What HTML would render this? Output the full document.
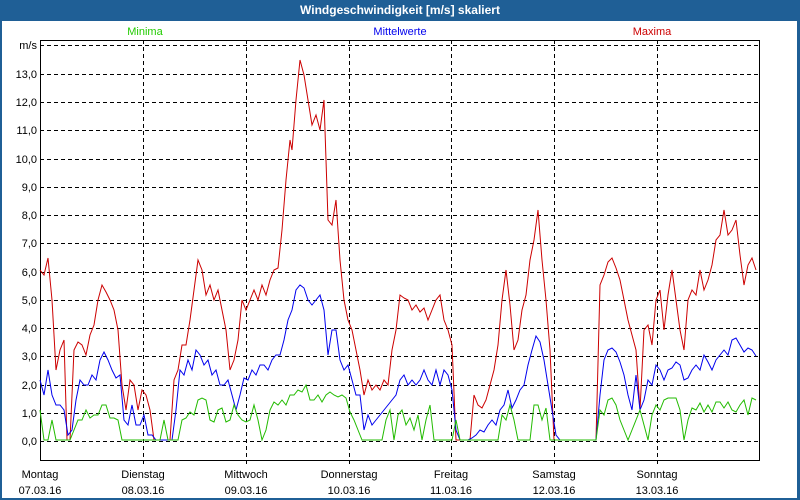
<!DOCTYPE html>
<html><head><style>
body{margin:0;width:800px;height:500px;overflow:hidden;background:#1f5f96;font-family:"Liberation Sans",sans-serif;}
#t{position:absolute;left:0;top:0;width:800px;height:20px;color:#fff;font-weight:bold;font-size:12px;text-align:center;line-height:20px;}
#b{position:absolute;left:2px;top:21px;width:795px;height:477px;background:#fff;}
svg{position:absolute;left:0;top:0}
text{font-family:"Liberation Sans",sans-serif;font-size:11px}
</style></head><body>
<div id="t">Windgeschwindigkeit [m/s] skaliert</div>
<div id="b"></div>
<svg width="800" height="500">
<g stroke="#000" stroke-dasharray="4,3" stroke-width="1">
<line x1="40" x2="760" y1="45.5" y2="45.5"/>
<line x1="40" x2="760" y1="74.5" y2="74.5"/><line x1="40" x2="760" y1="102.5" y2="102.5"/><line x1="40" x2="760" y1="130.5" y2="130.5"/><line x1="40" x2="760" y1="159.5" y2="159.5"/><line x1="40" x2="760" y1="187.5" y2="187.5"/><line x1="40" x2="760" y1="215.5" y2="215.5"/><line x1="40" x2="760" y1="243.5" y2="243.5"/><line x1="40" x2="760" y1="272.5" y2="272.5"/><line x1="40" x2="760" y1="300.5" y2="300.5"/><line x1="40" x2="760" y1="328.5" y2="328.5"/><line x1="40" x2="760" y1="356.5" y2="356.5"/><line x1="40" x2="760" y1="385.5" y2="385.5"/><line x1="40" x2="760" y1="413.5" y2="413.5"/><line x1="40" x2="760" y1="441.5" y2="441.5"/>
<line x1="143.5" x2="143.5" y1="40" y2="466"/><line x1="246.5" x2="246.5" y1="40" y2="466"/><line x1="349.5" x2="349.5" y1="40" y2="466"/><line x1="451.5" x2="451.5" y1="40" y2="466"/><line x1="554.5" x2="554.5" y1="40" y2="466"/><line x1="657.5" x2="657.5" y1="40" y2="466"/>
</g>
<rect x="40.5" y="40.5" width="719" height="420" fill="none" stroke="#000"/>
<g text-anchor="end" fill="#000">
<text x="37" y="49">m/s</text>
<text x="37" y="78">13,0</text><text x="37" y="106">12,0</text><text x="37" y="134">11,0</text><text x="37" y="163">10,0</text><text x="37" y="191">9,0</text><text x="37" y="219">8,0</text><text x="37" y="247">7,0</text><text x="37" y="276">6,0</text><text x="37" y="304">5,0</text><text x="37" y="332">4,0</text><text x="37" y="360">3,0</text><text x="37" y="389">2,0</text><text x="37" y="417">1,0</text><text x="37" y="445">0,0</text>
</g>
<text x="145" y="35" fill="#22cc00" text-anchor="middle">Minima</text>
<text x="400" y="35" fill="#0000ee" text-anchor="middle">Mittelwerte</text>
<text x="652" y="35" fill="#cc0000" text-anchor="middle">Maxima</text>
<g text-anchor="middle" fill="#000">
<text x="40" y="478">Montag</text><text x="40" y="494">07.03.16</text>
<text x="143" y="478">Dienstag</text><text x="143" y="494">08.03.16</text>
<text x="246" y="478">Mittwoch</text><text x="246" y="494">09.03.16</text>
<text x="349" y="478">Donnerstag</text><text x="349" y="494">10.03.16</text>
<text x="451" y="478">Freitag</text><text x="451" y="494">11.03.16</text>
<text x="554" y="478">Samstag</text><text x="554" y="494">12.03.16</text>
<text x="657" y="478">Sonntag</text><text x="657" y="494">13.03.16</text>
</g>
<g fill="none" stroke-width="1">
<polyline stroke="#cc0000" points="40,270 44,275 48,258 52,300 56,370 60,350 64,340 67,440 70,440 74,350 78,342 82,345 86,355 90,335 94,325 98,300 102,285 106,292 110,300 114,310 118,330 122,385 126,410 130,380 134,385 138,410 142,390 146,395 150,410 154,440 170,440 174,380 178,370 182,345 186,345 190,320 194,290 198,260 202,270 206,295 210,285 214,300 218,290 222,310 226,330 230,370 234,360 238,340 242,300 246,310 250,300 254,290 258,300 262,285 266,295 270,280 274,270 278,268 282,230 286,180 290,140 292,150 296,100 300,60 304,75 308,100 312,125 316,115 320,130 324,100 328,220 332,225 336,200 340,260 344,300 348,320 352,330 356,350 360,370 364,395 368,380 372,390 376,385 380,390 384,380 388,385 392,350 396,330 400,295 404,298 408,300 412,310 416,305 420,312 424,308 428,320 432,310 436,300 440,295 444,320 448,330 452,345 456,440 470,440 474,395 478,405 482,408 486,400 490,385 494,370 498,345 502,300 506,270 510,305 514,350 518,340 522,310 526,295 530,260 534,240 538,210 542,260 546,300 550,350 554,440 596,440 600,285 604,275 608,262 612,258 616,268 620,280 624,300 628,320 632,335 636,350 640,410 644,330 648,325 652,345 656,300 660,290 664,330 668,295 672,270 676,300 680,330 684,350 688,300 692,290 696,295 700,270 704,290 708,280 712,265 716,240 720,235 724,210 728,235 732,230 736,220 740,255 744,285 748,265 752,258 756,270"/>
<polyline stroke="#0000ee" points="40,380 44,395 48,370 52,395 56,405 60,405 64,410 68,435 72,430 76,400 80,380 84,385 88,385 92,375 96,380 100,360 104,352 108,360 112,370 116,378 120,375 124,420 128,425 132,405 136,425 140,425 144,415 148,435 152,435 156,440 172,440 176,410 180,370 184,375 188,360 192,370 196,350 200,355 204,365 208,360 212,375 216,370 220,385 224,385 228,380 232,395 236,410 240,395 244,378 248,380 252,370 256,375 260,365 264,365 268,370 272,360 276,355 280,355 284,340 288,320 292,310 296,290 300,285 304,288 308,300 312,305 316,300 320,295 324,310 328,355 332,330 336,330 340,360 344,370 348,365 352,380 356,395 360,395 364,430 368,415 372,425 376,420 380,415 384,410 388,405 392,400 396,395 400,380 404,375 408,385 412,380 416,385 420,380 424,370 428,380 432,385 436,370 440,385 444,370 448,375 452,390 456,430 460,440 468,440 472,438 476,435 480,430 484,432 488,425 492,420 496,425 500,410 504,405 508,390 512,408 516,400 520,390 524,385 528,365 532,350 536,336 540,342 544,360 548,385 552,410 556,435 560,440 596,440 600,395 604,360 608,350 612,348 616,352 620,362 624,375 628,395 632,410 636,375 640,410 644,400 648,380 652,385 656,365 660,370 664,380 668,370 672,368 676,362 680,365 684,380 688,378 692,370 696,365 700,370 704,355 708,362 712,370 716,360 720,355 724,350 728,355 732,340 736,338 740,345 744,352 748,348 752,350 756,356"/>
<polyline stroke="#22bb00" points="40,410 44,440 48,440 52,420 56,440 70,440 74,430 78,420 82,420 86,410 90,418 94,415 98,415 102,405 106,405 110,418 114,418 118,420 122,440 160,440 164,420 168,440 178,440 182,420 186,418 190,412 194,415 198,400 202,398 206,400 210,420 214,422 218,410 222,408 226,422 230,420 234,405 238,415 242,420 246,422 250,420 254,405 258,420 262,440 266,430 270,410 274,402 278,405 282,400 286,405 290,395 294,395 298,390 302,392 306,385 310,400 314,400 318,395 322,402 326,395 330,392 334,395 338,397 342,395 346,398 350,412 354,420 358,430 362,440 382,440 386,420 390,410 394,440 398,415 402,410 406,425 410,418 414,430 418,415 422,440 426,420 430,405 434,440 452,440 456,420 460,440 498,440 502,415 506,420 510,405 514,420 518,440 530,440 534,405 538,405 542,420 546,408 550,440 596,440 600,410 604,415 608,400 612,398 616,405 620,420 624,430 628,440 632,430 636,420 640,410 644,425 648,440 652,415 656,405 660,410 664,400 668,398 672,398 676,398 680,410 684,440 688,420 692,408 696,410 700,403 704,412 708,405 712,412 716,402 720,402 724,408 728,402 732,410 736,412 740,405 744,400 748,415 752,398 756,400"/>
</g>
</svg>
</body></html>
